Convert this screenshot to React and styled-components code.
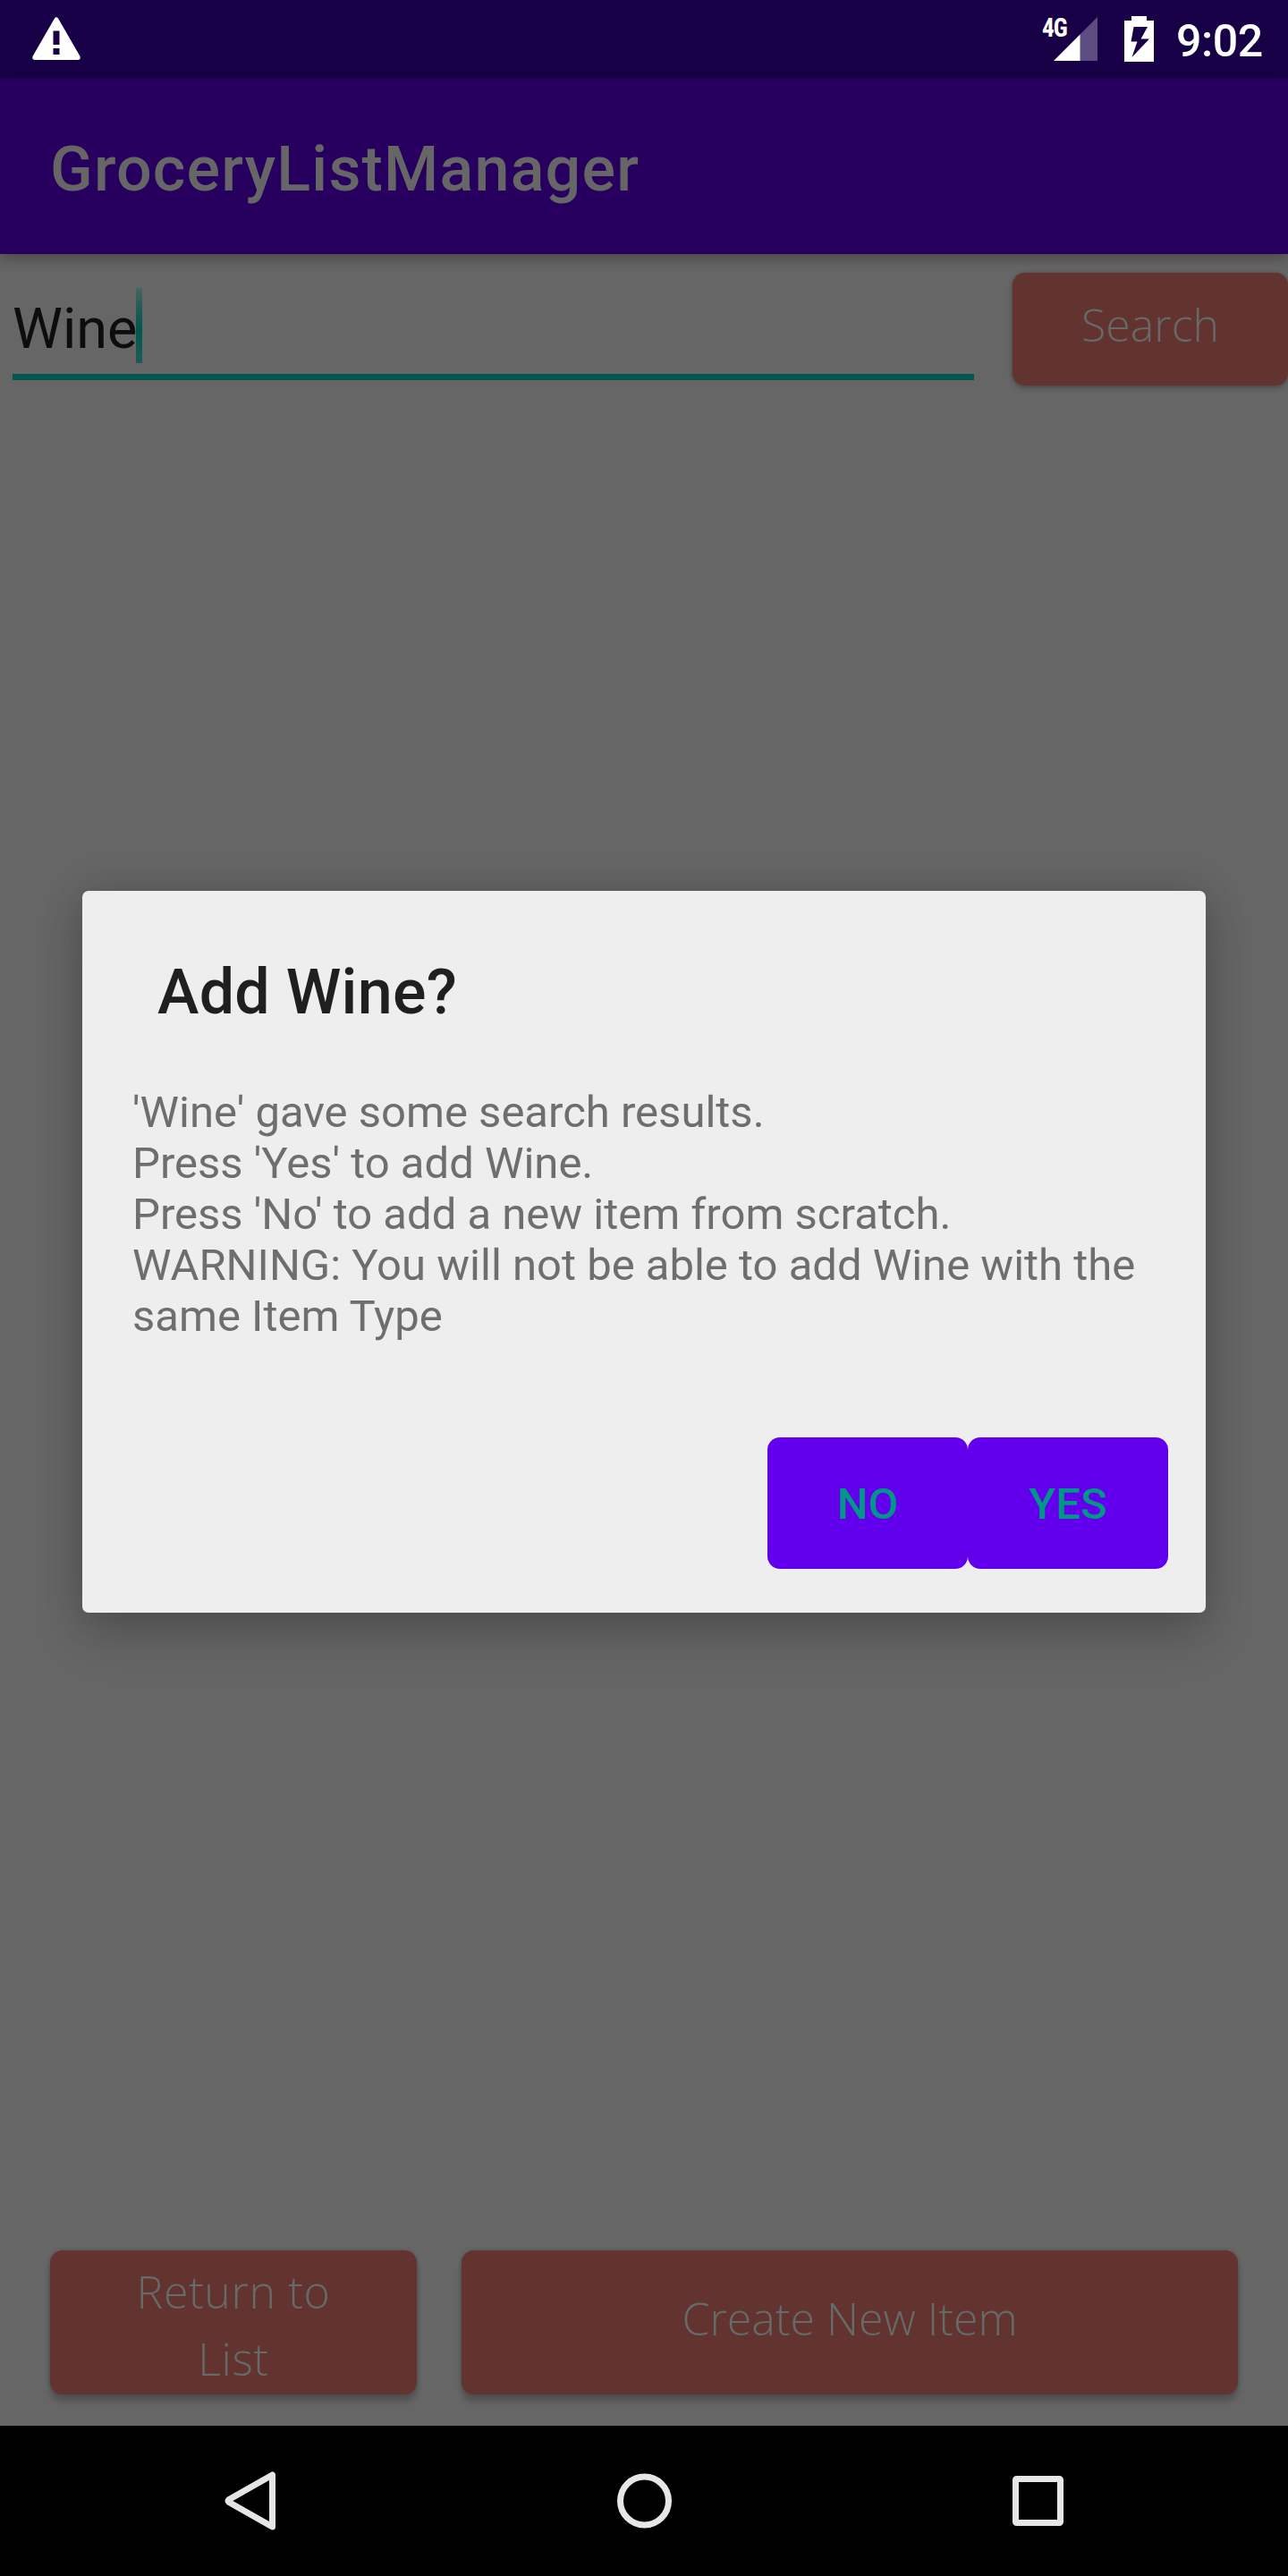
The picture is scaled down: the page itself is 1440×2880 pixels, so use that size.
import React from "react";
import styled, { createGlobalStyle } from "styled-components";

const GlobalStyle = createGlobalStyle`
  * { box-sizing: border-box; }
  body { margin: 0; background: #666666; }
  button { border: 0; margin: 0; padding: 0; font: inherit; }
`;

const Screen = styled.div`
  position: relative;
  display: flex;
  flex-direction: column;
  width: 1440px;
  height: 2880px;
  overflow: hidden;
  background: #666666;
  font-family: Roboto, sans-serif;
`;

const StatusBar = styled.header`
  display: flex;
  align-items: flex-start;
  flex: 0 0 88px;
  padding: 0 29px 0 36px;
  background: #180047;
  color: #ffffff;
`;

const StatusIcons = styled.div`
  display: flex;
  align-items: flex-start;
  margin-left: auto;
`;

const WarningIcon = styled.svg`
  width: 54px;
  height: 50px;
  margin-top: 18px;
`;

const NetworkType = styled.span`
  margin: 14px -17px 0 0;
  width: 30px;
  font-family: "Roboto Condensed", Roboto, sans-serif;
  font-size: 29px;
  font-weight: 700;
  line-height: 34px;
  letter-spacing: -1px;
  white-space: nowrap;
  transform: scaleX(0.94);
  transform-origin: left;
`;

const SignalIcon = styled.svg`
  width: 49px;
  height: 49px;
  margin: 19px 30px 0 0;
`;

const BatteryIcon = styled.svg`
  width: 33px;
  height: 51px;
  margin: 18px 25px 0 0;
`;

const Clock = styled.span`
  width: 96px;
  margin-top: 4px;
  font-size: 50px;
  font-weight: 500;
  line-height: 84px;
  letter-spacing: -0.4px;
  white-space: nowrap;
`;

const AppBar = styled.div`
  display: flex;
  align-items: center;
  flex: 0 0 196px;
  padding: 6px 56px 0;
  background: #27005f;
  box-shadow: 0 5px 14px rgba(0, 0, 0, 0.3);
`;

const AppTitle = styled.h1`
  margin: 0;
  color: #666666;
  font-size: 70px;
  font-weight: 500;
  line-height: 82px;
  letter-spacing: 1.2px;
`;

const Content = styled.main`
  display: flex;
  flex-direction: column;
  justify-content: space-between;
  flex: 1;
  padding-bottom: 35px;
`;

const SearchRow = styled.div`
  display: flex;
  align-items: flex-start;
  justify-content: space-between;
  padding: 21px 0 0 14px;
`;

const SearchField = styled.div`
  display: flex;
  align-items: flex-start;
  width: 1075px;
  height: 120px;
  padding-top: 17px;
  border-bottom: 7px solid #01574f;
`;

const FieldText = styled.span`
  padding-top: 9px;
  color: #0d0d0d;
  font-size: 63px;
  line-height: 74px;
`;

const Cursor = styled.i`
  width: 7px;
  height: 84px;
  margin-left: -1px;
  background: linear-gradient(#4a6562 0%, #1f5c56 28%, #01574f 55%, #1f5b55 100%);
`;

const CasualButton = styled.button`
  display: flex;
  align-items: center;
  justify-content: center;
  width: ${(p) => p.$width}px;
  height: ${(p) => p.$height}px;
  padding-top: ${(p) => p.$lower || 0}px;
  padding-bottom: ${(p) => p.$lift || 0}px;
  border-radius: 14px;
  background: #63332f;
  box-shadow: 0 ${(p) => p.$drop}px 6px rgba(0, 0, 0, 0.18), 0 0 4px rgba(0, 0, 0, 0.22);
  color: #666a6a;
  font-family: "Coming Soon", "Open Sans", sans-serif;
  font-size: 50px;
  font-weight: 300;
  line-height: 75px;
  letter-spacing: ${(p) => p.$tracking || 0}px;
  text-align: center;
`;

const BottomRow = styled.div`
  display: flex;
  justify-content: space-between;
  padding: 0 56px;
`;

const NavBar = styled.nav`
  display: flex;
  align-items: center;
  justify-content: space-between;
  flex: 0 0 168px;
  padding: 0 251px;
  background: #000000;
`;

const NavIcon = styled.svg`
  width: ${(p) => p.$size}px;
  height: 68px;
  fill: none;
  stroke: #e6e6e6;
  stroke-width: 7;
  stroke-linejoin: round;
`;

const DialogLayer = styled.div`
  position: absolute;
  inset: 88px 0 168px;
  display: flex;
  align-items: center;
  justify-content: center;
  padding-bottom: 1px;
`;

const Dialog = styled.section`
  display: flex;
  flex-direction: column;
  width: 1256px;
  height: 807px;
  padding: 72px 42px 49px 56px;
  border-radius: 7px;
  background: #eeeeee;
  box-shadow: 0 28px 56px rgba(0, 0, 0, 0.16), 0 0 46px rgba(0, 0, 0, 0.16);
`;

const DialogTitle = styled.h2`
  margin: 0 0 0 28px;
  color: #1f1f1f;
  font-size: 70px;
  font-weight: 500;
  line-height: 82px;
  letter-spacing: 0.25px;
`;

const DialogText = styled.p`
  margin: 65px 0 0;
  color: #6e6e6e;
  font-size: 49px;
  line-height: 57px;
  white-space: nowrap;
`;

const DialogActions = styled.div`
  display: flex;
  justify-content: flex-end;
  margin-top: auto;
`;

const DialogButton = styled.button`
  width: 224px;
  height: 147px;
  padding-top: 2px;
  border-radius: 14px;
  background: #6200ee;
  color: #009688;
  font-size: 49px;
  font-weight: 500;
  line-height: 57px;
  text-align: center;
`;

const message = [
  "'Wine' gave some search results.",
  "Press 'Yes' to add Wine.",
  "Press 'No' to add a new item from scratch.",
  "WARNING: You will not be able to add Wine with the",
  "same Item Type",
];

const stackLines = (lines) =>
  lines.map((line, i) => (
    <React.Fragment key={line}>
      {i > 0 && <br />}
      {line}
    </React.Fragment>
  ));

export default function App() {
  return (
    <Screen>
      <GlobalStyle />
      <StatusBar>
        <WarningIcon viewBox="0 0 54 50">
          <path
            fill="#fff"
            fillRule="evenodd"
            d="M25 2.5Q27 0 29 2.5L53.500 45Q54.500 49 51 49H3Q-.5 49 .5 45ZM23.500 16.500V32H30.500V16.500ZM23.500 36V43H30.500V36Z"
          />
        </WarningIcon>
        <StatusIcons>
          <NetworkType>4G</NetworkType>
          <SignalIcon viewBox="0 0 49 49">
            <path fill="#5d4c80" d="M49 0V49H29V20Z" />
            <path fill="#fff" d="M29.500 19.500V49H0Z" />
          </SignalIcon>
          <BatteryIcon viewBox="0 0 33 51">
            <path
              fill="#fff"
              fillRule="evenodd"
              d="M8 0H25V5H33V51H0V5H8ZM10.500 12L7.500 28.500H14.500L8.500 46L28 25.500H18.500L26 12Z"
            />
          </BatteryIcon>
          <Clock>9:02</Clock>
        </StatusIcons>
      </StatusBar>
      <AppBar>
        <AppTitle>GroceryListManager</AppTitle>
      </AppBar>
      <Content>
        <SearchRow>
          <SearchField>
            <FieldText>Wine</FieldText>
            <Cursor />
          </SearchField>
          <CasualButton $width={308} $height={126} $drop={4} $lift={9}>
            Search
          </CasualButton>
        </SearchRow>
        <BottomRow>
          <CasualButton $width={410} $height={161} $drop={9} $lower={7} $tracking={0.6}>
            <span>{stackLines(["Return to", "List"])}</span>
          </CasualButton>
          <CasualButton $width={868} $height={161} $drop={9} $lift={9}>
            Create New Item
          </CasualButton>
        </BottomRow>
      </Content>
      <NavBar>
        <NavIcon $size={57} viewBox="0 0 57 68">
          <path d="M53.500 5V63L5 35.500Q3 34 5 32.500Z" />
        </NavIcon>
        <NavIcon $size={61} viewBox="0 0 61 68">
          <circle cx="30.500" cy="34" r="27" />
        </NavIcon>
        <NavIcon $size={57} viewBox="0 0 57 68">
          <rect x="3.500" y="9.500" width="50" height="49" rx="1" />
        </NavIcon>
      </NavBar>
      <DialogLayer>
        <Dialog role="dialog">
          <DialogTitle>Add Wine?</DialogTitle>
          <DialogText>{stackLines(message)}</DialogText>
          <DialogActions>
            <DialogButton>NO</DialogButton>
            <DialogButton>YES</DialogButton>
          </DialogActions>
        </Dialog>
      </DialogLayer>
    </Screen>
  );
}
